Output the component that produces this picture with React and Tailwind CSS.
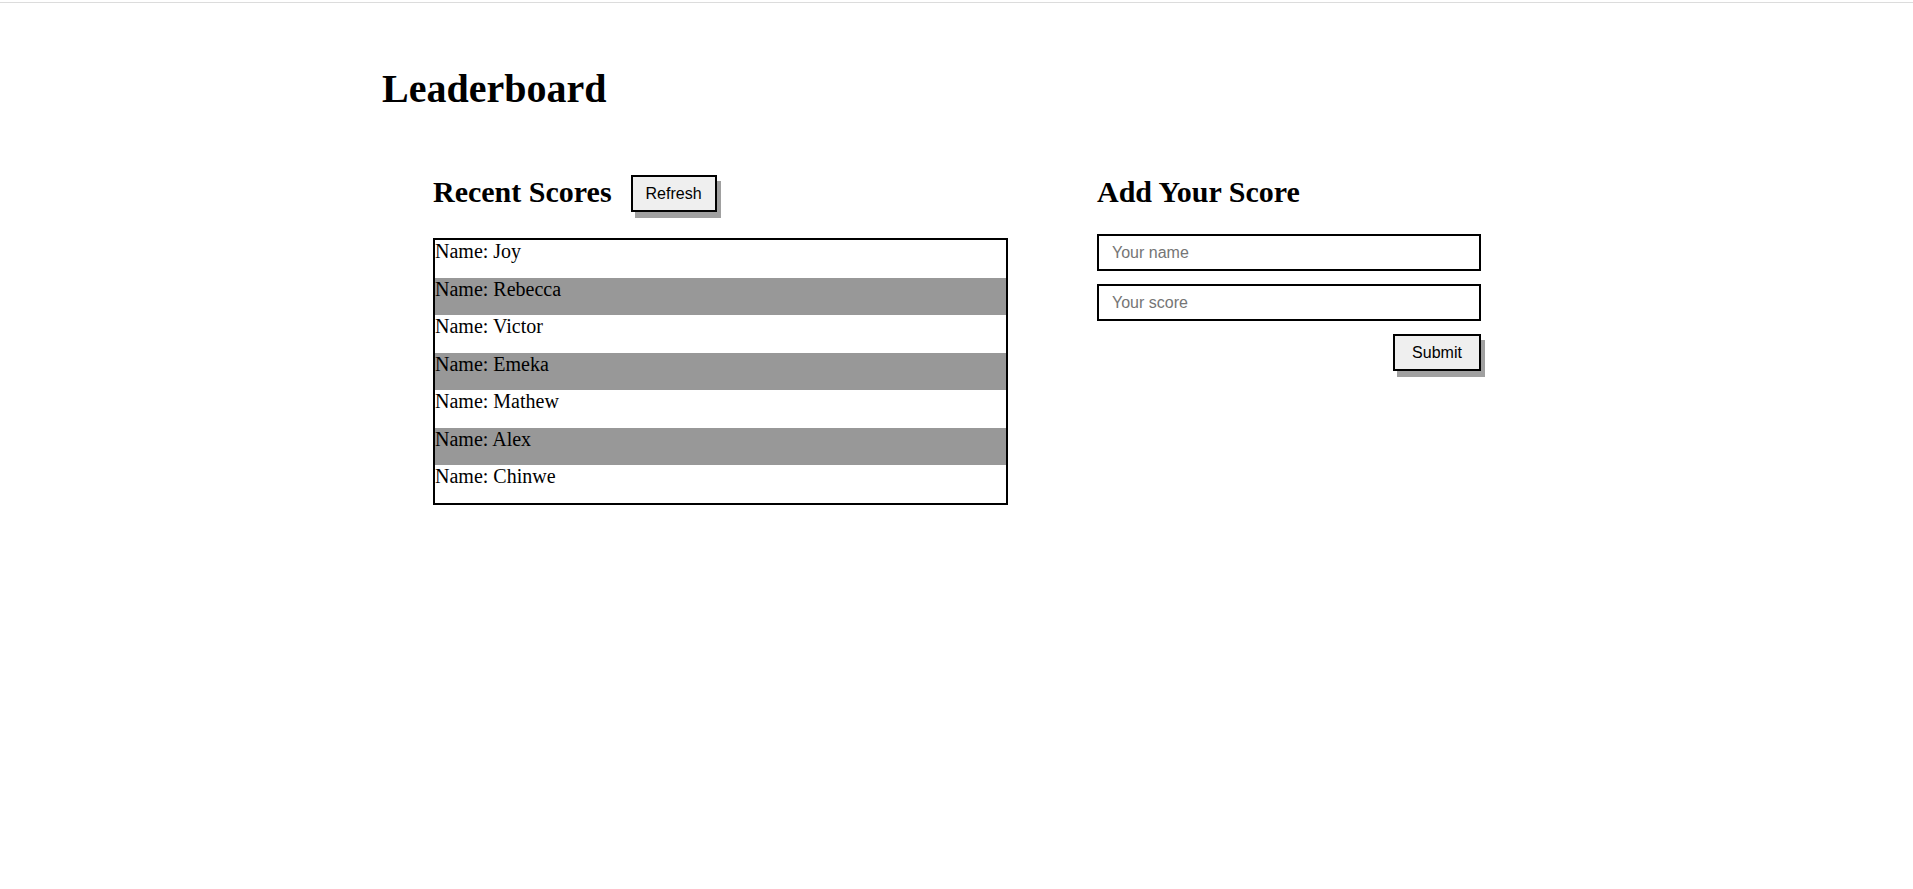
import React from 'react'

// recent scores list + add score form
const SCORES = ['Joy', 'Rebecca', 'Victor', 'Emeka', 'Mathew', 'Alex', 'Chinwe']

const serif = "font-['Liberation_Serif','Times_New_Roman',serif]"
const sans = "font-['Liberation_Sans',Arial,sans-serif]"

function ShadowButton({ children, className = '' }) {
  return (
    <button
      className={`${sans} h-[37px] border-2 border-black bg-[#efefef] text-[16px] text-black shadow-[4px_6px_0_#a0a0a0] ${className}`}
    >
      {children}
    </button>
  )
}

export default function App() {
  return (
    <div className={`${serif} min-h-screen bg-white text-black`}>
      {/* thin top rule */}
      <div className="mt-[2px] h-[1px] bg-[#dcdcdc]" />

      <div className="mx-auto w-[1149px]">
        <h1 className="mt-[63px] text-[40px] font-bold leading-[46px]">Leaderboard</h1>

        <div className="mt-[63px] ml-[51px] flex gap-[89px]">
          {/* Recent scores */}
          <section className="w-[575px]">
            <div className="flex h-[37px] items-start gap-[19px]">
              <h2 className="text-[30px] font-bold leading-[33px]">Recent Scores</h2>
              <ShadowButton className="w-[86px]">Refresh</ShadowButton>
            </div>
            <ul className="mt-[26px] border-2 border-black">
              {SCORES.map((name, i) => (
                <li
                  key={name}
                  className={`h-[37.5px] text-[20px] leading-[23px] ${i % 2 === 1 ? 'bg-[#989898]' : 'bg-white'}`}
                >
                  Name: {name}
                </li>
              ))}
            </ul>
          </section>

          {/* Add score */}
          <section className="w-[384px]">
            <div className="h-[37px]">
              <h2 className="text-[30px] font-bold leading-[33px]">Add Your Score</h2>
            </div>
            <form className="mt-[22px] flex flex-col gap-[13px]" onSubmit={(e) => e.preventDefault()}>
              <input
                placeholder="Your name"
                className={`${sans} h-[37px] w-full border-2 border-black bg-white px-[13px] text-[16px] outline-none placeholder:text-[#757575]`}
              />
              <input
                placeholder="Your score"
                className={`${sans} h-[37px] w-full border-2 border-black bg-white px-[13px] text-[16px] outline-none placeholder:text-[#757575]`}
              />
              <div className="flex justify-end">
                <ShadowButton className="w-[88px]">Submit</ShadowButton>
              </div>
            </form>
          </section>
        </div>
      </div>
    </div>
  )
}
